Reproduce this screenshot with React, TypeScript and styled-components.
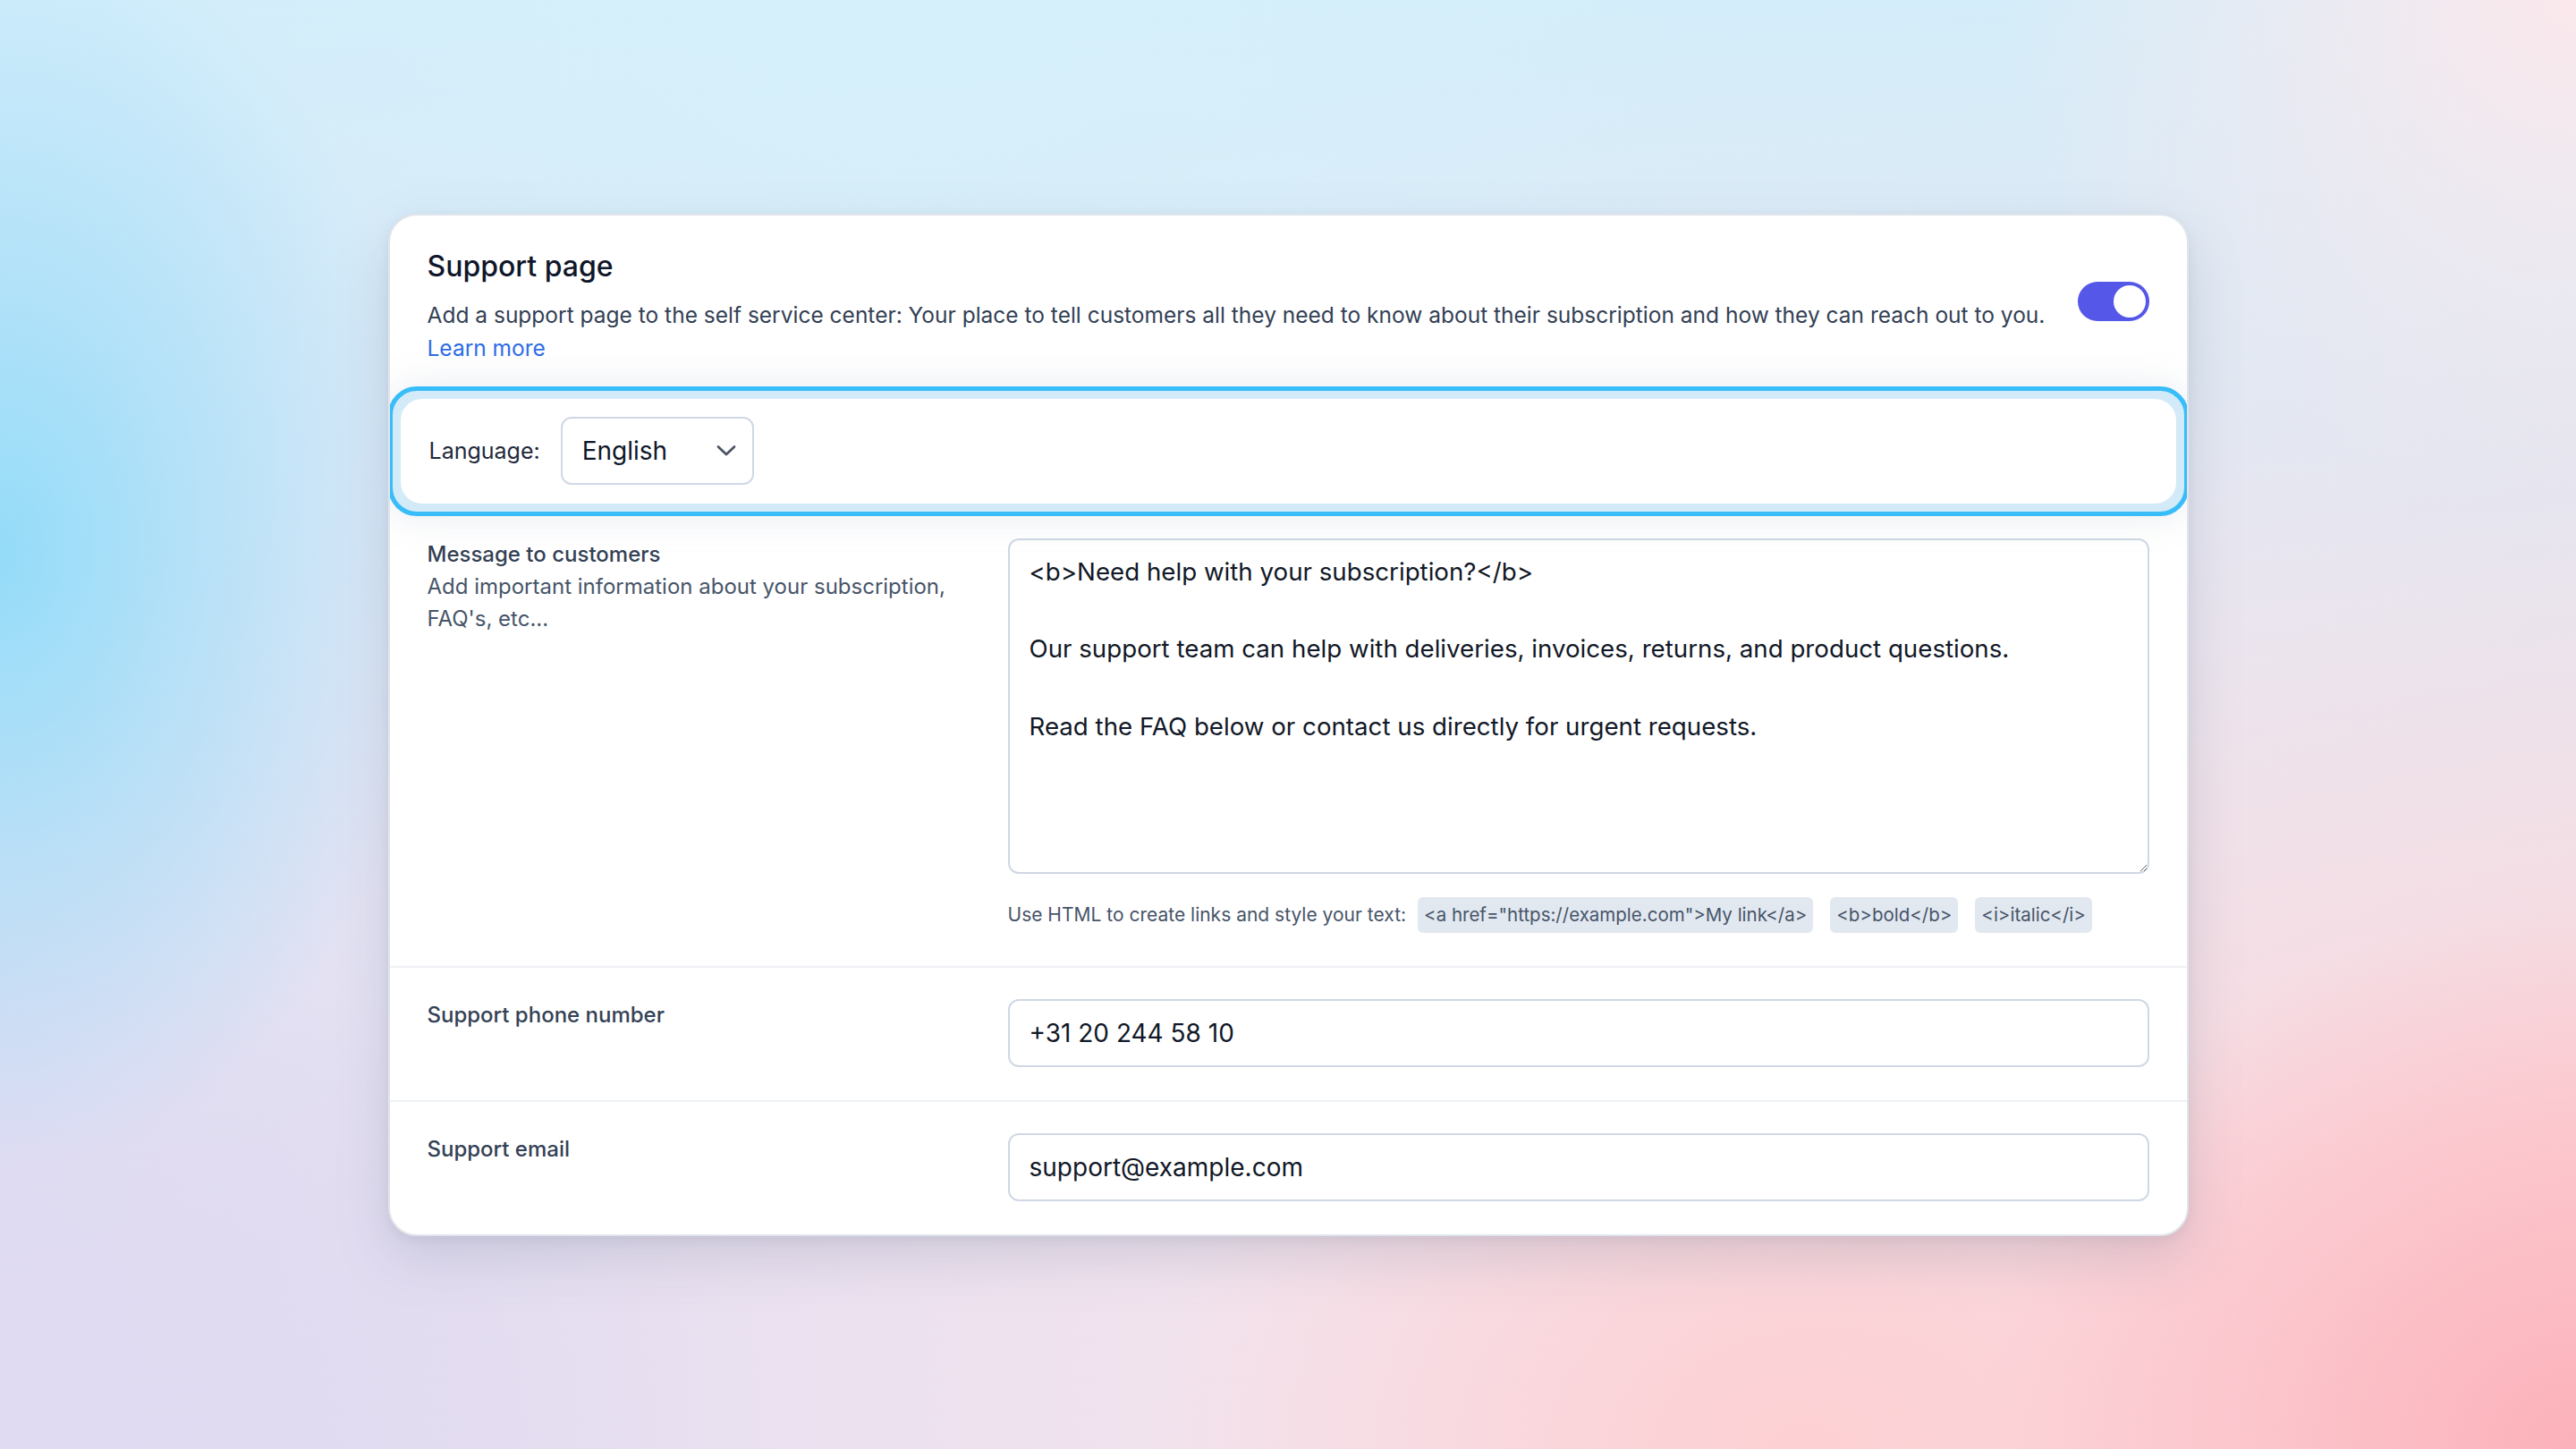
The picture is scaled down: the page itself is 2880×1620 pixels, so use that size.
import styled, { createGlobalStyle } from "styled-components";

const GlobalStyle = createGlobalStyle`
    html, body {
        margin: 0;
        padding: 0;
    }
    body {
        font-family: Inter, "Noto Sans", sans-serif;
        color: #0f172a;
    }
    * {
        box-sizing: border-box;
    }
`

const Page = styled.div`
    width: 100vw;
    min-height: 100vh;
    display: flex;
    align-items: center;
    justify-content: center;
    background-color: #eee8f2;
    background-image:
        radial-gradient(ellipse 700px 1000px at 0% 38%, #94dcf9 0%, rgba(148, 220, 249, 0) 70%),
        radial-gradient(ellipse 1200px 700px at 35% 0%, #d6f0fb 0%, rgba(214, 240, 251, 0) 75%),
        radial-gradient(ellipse 900px 800px at 100% 100%, #fcb1ba 0%, rgba(252, 177, 186, 0) 75%),
        radial-gradient(ellipse 1000px 700px at 70% 100%, #fdd0d3 0%, rgba(253, 208, 211, 0) 75%),
        radial-gradient(ellipse 1100px 700px at 0% 100%, #e0daf2 0%, rgba(224, 218, 242, 0) 80%),
        radial-gradient(ellipse 800px 700px at 100% 0%, #fbe8ec 0%, rgba(251, 232, 236, 0) 80%),
        linear-gradient(180deg, rgba(210, 238, 251, 0.95) 0%, rgba(226, 236, 248, 0.6) 45%, rgba(236, 230, 244, 0) 80%),
        linear-gradient(90deg, #dedcf2 0%, #f3e4ee 50%, #fcd6da 100%);
`

const Card = styled.div`
    width: 2013px;
    background: #ffffff;
    border: 2px solid #e1e5eb;
    border-radius: 32px;
    box-shadow: 0 24px 60px rgba(100, 116, 139, 0.22), 0 4px 12px rgba(100, 116, 139, 0.1);
    overflow: hidden;
`

const Header = styled.div`
    display: flex;
    align-items: center;
    gap: 16px;
    padding: 37px 42px 24px 42px;
`

const HeaderText = styled.div`
    flex: 1;
    display: flex;
    flex-direction: column;
    gap: 16px;
`

const Title = styled.h2`
    margin: 0;
    font-size: 32px;
    line-height: 40px;
    font-weight: 500;
    color: #0f172a;
`

const Description = styled.p`
    margin: 0;
    font-size: 24.5px;
    line-height: 37px;
    color: #334155;
`

const LearnMore = styled.a`
    color: #2f6ce5;
    text-decoration: none;
    display: block;
`

const Toggle = styled.div<{ $on: boolean }>`
    flex-shrink: 0;
    width: 80px;
    height: 44px;
    margin-bottom: 11px;
    border-radius: 22px;
    background: ${(p) => (p.$on ? "#5457e8" : "#cbd5e1")};
    display: flex;
    align-items: center;
    justify-content: ${(p) => (p.$on ? "flex-end" : "flex-start")};
    padding: 4px;
`

const Knob = styled.span`
    width: 36px;
    height: 36px;
    border-radius: 50%;
    background: #ffffff;
`

const LangOuter = styled.div`
    margin: 0 -2px;
    border: 5px solid #38bdf8;
    border-radius: 32px;
    background: #d3ebf8;
    padding: 9px;
    box-shadow: 0 0 40px rgba(148, 163, 184, 0.22);
    position: relative;
`

const LangInner = styled.div`
    background: #ffffff;
    border-radius: 24px;
    display: flex;
    align-items: center;
    gap: 23px;
    padding: 0 32px;
    height: 117px;
`

const LangLabel = styled.span`
    font-size: 25px;
    color: #1e293b;
`

const Select = styled.div`
    width: 216px;
    height: 76px;
    border: 2px solid #cfd8e4;
    border-radius: 12px;
    display: flex;
    align-items: center;
    justify-content: space-between;
    padding: 0 18px 0 22px;
    font-size: 28px;
    color: #0f172a;
`

const Section = styled.div<{ $divider?: boolean }>`
    display: grid;
    grid-template-columns: 649px 1fr;
    align-items: start;
    padding: ${(p) => (p.$divider ? "35px 42px 37px" : "25px 42px 37px")};
    border-top: ${(p) => (p.$divider ? "2px solid #eef1f5" : "none")};
`

const LabelBlock = styled.div`
    display: flex;
    flex-direction: column;
    padding-right: 40px;
`

const FieldLabel = styled.div`
    font-size: 24px;
    line-height: 36px;
    font-weight: 500;
    color: #334155;
`

const FieldHint = styled.div`
    font-size: 24px;
    line-height: 36px;
    color: #475569;
`

const TextArea = styled.textarea`
    display: block;
    width: 100%;
    height: 375px;
    border: 2px solid #cfd8e4;
    border-radius: 12px;
    padding: 14px 22px;
    font-family: Inter, "Noto Sans", sans-serif;
    font-size: 27.7px;
    line-height: 43.3px;
    color: #111827;
    resize: vertical;
    outline: none;
`

const HelpRow = styled.div`
    display: flex;
    align-items: center;
    gap: 19px;
    margin-top: 26px;
    font-size: 21px;
    color: #475569;
`

const HelpText = styled.span`
    margin-right: -6px;
`

const Chip = styled.code`
    font-family: Inter, "Noto Sans", sans-serif;
    font-size: 20.5px;
    line-height: 40px;
    padding: 0 7px;
    border-radius: 6px;
    background: #e2e8f0;
    color: #475569;
`

const Input = styled.input`
    display: block;
    width: 100%;
    height: 76px;
    border: 2px solid #cfd8e4;
    border-radius: 12px;
    padding: 0 22px;
    font-family: Inter, "Noto Sans", sans-serif;
    font-size: 28px;
    color: #111827;
    outline: none;
`

const message =
    "<b>Need help with your subscription?</b>\n\nOur support team can help with deliveries, invoices, returns, and product questions.\n\nRead the FAQ below or contact us directly for urgent requests."

function Chevron() {
    return (
        <svg width="22" height="14" viewBox="0 0 22 14" fill="none">
            <path d="M2 2.5L11 11L20 2.5" stroke="#4b5563" strokeWidth="2.8" strokeLinecap="round" strokeLinejoin="round" />
        </svg>
    )
}

export default function App() {
    return (
        <Page>
            <GlobalStyle />
            <Card>
                <Header>
                    <HeaderText>
                        <Title>Support page</Title>
                        <Description>
                            Add a support page to the self service center: Your place to tell customers all they need to know about their subscription and how they can reach out to you.
                            <LearnMore href="#">Learn more</LearnMore>
                        </Description>
                    </HeaderText>
                    <Toggle $on={true}>
                        <Knob />
                    </Toggle>
                </Header>

                <LangOuter>
                    <LangInner>
                        <LangLabel>Language:</LangLabel>
                        <Select>
                            English
                            <Chevron />
                        </Select>
                    </LangInner>
                </LangOuter>

                <Section>
                    <LabelBlock>
                        <FieldLabel>Message to customers</FieldLabel>
                        <FieldHint>Add important information about your subscription, FAQ's, etc...</FieldHint>
                    </LabelBlock>
                    <div>
                        <TextArea defaultValue={message} />
                        <HelpRow>
                            <HelpText>Use HTML to create links and style your text:</HelpText>
                            <Chip>{'<a href="https://example.com">My link</a>'}</Chip>
                            <Chip>{"<b>bold</b>"}</Chip>
                            <Chip>{"<i>italic</i>"}</Chip>
                        </HelpRow>
                    </div>
                </Section>

                <Section $divider>
                    <FieldLabel>Support phone number</FieldLabel>
                    <Input defaultValue="+31 20 244 58 10" />
                </Section>

                <Section $divider>
                    <FieldLabel>Support email</FieldLabel>
                    <Input defaultValue="support@example.com" />
                </Section>
            </Card>
        </Page>
    )
}
